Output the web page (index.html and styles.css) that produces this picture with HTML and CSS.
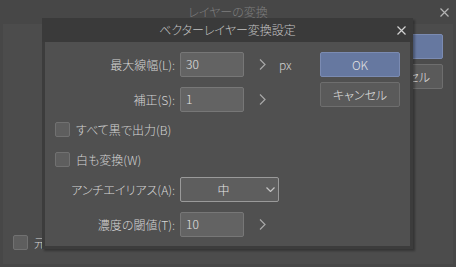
FILE: index.html
```html
<!DOCTYPE html>
<html lang="ja">
<head>
  <meta charset="UTF-8">
  <meta name="viewport" content="width=device-width, initial-scale=1.0">
  <title>ベクターレイヤー変換設定</title>
  <link rel="stylesheet" href="styles.css">
</head>
<body>
  <div class="window">
    <!-- Back window: layer conversion -->
    <div class="titlebar back-title">
      <span></span>
      <span class="title">レイヤーの変換</span>
      <span class="close">
        <svg width="9" height="9" viewBox="0 0 9 9"><path d="M0.5 0.5L8.5 8.5M8.5 0.5L0.5 8.5"/></svg>
      </span>
    </div>
    <div class="back-body">
      <div class="back-left">
        <label class="check"><span class="box"></span>元のレイヤーを残す</label>
      </div>
      <div class="buttons">
        <button class="btn primary">OK</button>
        <button class="btn">キャンセル</button>
      </div>
    </div>

    <!-- Front dialog: vector layer conversion settings -->
    <div class="dialog">
      <div class="titlebar front-title">
        <span></span>
        <span class="title">ベクターレイヤー変換設定</span>
        <span class="close">
          <svg width="9" height="9" viewBox="0 0 9 9"><path d="M0.5 0.5L8.5 8.5M8.5 0.5L0.5 8.5"/></svg>
        </span>
      </div>
      <div class="dialog-body">
        <div class="form">
          <div class="row">
            <span class="label">最大線幅(L):</span>
            <input class="field" type="text" value="30">
            <svg class="arrow" width="7" height="11" viewBox="0 0 7 11"><polyline points="1,0.5 6,5.5 1,10.5"/></svg>
            <span class="unit">px</span>
          </div>
          <div class="row">
            <span class="label">補正(S):</span>
            <input class="field" type="text" value="1">
            <svg class="arrow" width="7" height="11" viewBox="0 0 7 11"><polyline points="1,0.5 6,5.5 1,10.5"/></svg>
          </div>
          <label class="check first"><span class="box"></span>すべて黒で出力(B)</label>
          <label class="check second"><span class="box"></span>白も変換(W)</label>
          <div class="row">
            <span class="label">アンチエイリアス(A):</span>
            <div class="select">
              <span class="value">中</span>
              <svg class="caret" width="9" height="5" viewBox="0 0 9 5"><polyline points="0.5,0.5 4.5,4.5 8.5,0.5"/></svg>
            </div>
          </div>
          <div class="row">
            <span class="label">濃度の閾値(T):</span>
            <input class="field" type="text" value="10">
            <svg class="arrow" width="7" height="11" viewBox="0 0 7 11"><polyline points="1,0.5 6,5.5 1,10.5"/></svg>
          </div>
        </div>
        <div class="buttons">
          <button class="btn primary">OK</button>
          <button class="btn">キャンセル</button>
        </div>
      </div>
    </div>
  </div>
</body>
</html>
```

FILE: styles.css
```css
/* Dark dialog look */
body {
  margin: 0;
  font-family: "Noto Sans CJK JP", "Noto Sans", sans-serif;
  font-feature-settings: "palt";
  font-size: 12px;
  font-weight: 300;
  color: #d4d4d4;
  background-color: #474747;
}

.window {
  position: relative;
  width: 456px;
  height: 267px;
  display: flex;
  flex-direction: column;
  background-color: #474747;
  overflow: hidden;
}

/* Title bars: empty cell, centered title, close button */
.titlebar {
  display: grid;
  grid-template-columns: 24px 1fr 24px;
  align-items: center;
  height: 24px;
  line-height: 24px;
}
.titlebar .title { text-align: center; }
.titlebar .close {
  display: flex;
  justify-content: center;
  align-items: center;
}
.close svg path { stroke-width: 1.2; fill: none; }

.back-title { color: #7e7e7e; }
.back-title .close svg path { stroke: #b4b4b4; }

/* Back window body */
.back-body {
  flex: 1;
  display: flex;
  justify-content: space-between;
  margin: 0 3px 3px;
  padding: 10px 10px 14px;
  background-color: #4c4c4c;
}
.back-left {
  display: flex;
  align-items: flex-end;
}

/* Buttons */
.buttons {
  display: flex;
  flex-direction: column;
  gap: 5px;
}
.btn {
  width: 80px;
  height: 25px;
  padding: 0;
  font: inherit;
  color: #e2e2e2;
  background-color: #5a5a5a;
  border: 1px solid #6e6e6e;
  border-radius: 2px;
}
.btn.primary {
  background-color: #6678a0;
  border-color: #7b8bb2;
}

/* Checkbox */
.check {
  display: flex;
  align-items: center;
  gap: 6px;
  height: 15px;
  line-height: 15px;
}
.box {
  box-sizing: border-box;
  width: 15px;
  height: 15px;
  background-color: #5e5e5e;
  border: 1px solid #717171;
  border-radius: 2px;
}

/* Front dialog */
.dialog {
  position: absolute;
  left: 42px;
  top: 18px;
  width: 371px;
  box-shadow: 2px 2px 2px rgba(0, 0, 0, 0.3);
}
.front-title {
  background-color: #3a3a3a;
  color: #c4c4c4;
}
.front-title .close svg path { stroke: #d2d2d2; }

.dialog-body {
  display: flex;
  background-color: #505050;
  border: 3px solid #3c3c3c;
  border-top: 0;
  padding: 0 10px 9px 0;
}
.dialog-body .buttons { padding-top: 10px; }

.form {
  flex: 1;
  display: flex;
  flex-direction: column;
  padding-left: 10px;
}
.row {
  display: flex;
  align-items: center;
  height: 25px;
  margin-top: 10px;
}
.label {
  width: 120px;
  margin-right: 5px;
  text-align: right;
}
.field {
  box-sizing: border-box;
  width: 64px;
  height: 25px;
  padding: 0 5px 2px;
  font: inherit;
  color: #e4e4e4;
  background-color: #636363;
  border: 1px solid #777;
  border-radius: 2px;
}
.arrow { margin-left: 15px; }
.arrow polyline, .caret polyline {
  fill: none;
  stroke: #a8a8a8;
  stroke-width: 1.2;
}
.unit {
  margin-left: 13px;
  color: #d0d0d0;
}

.check.first { margin-top: 10px; }
.check.second { margin-top: 15px; }

.select {
  box-sizing: border-box;
  display: flex;
  align-items: center;
  width: 99px;
  height: 25px;
  background-color: #5e5e5e;
  border: 1px solid #9a9a9a;
  border-radius: 2px;
}
.select .value {
  flex: 1;
  text-align: center;
  color: #e6e6e6;
}
.caret { margin-right: 3px; }
.caret polyline { stroke: #c4c4c4; }
```
